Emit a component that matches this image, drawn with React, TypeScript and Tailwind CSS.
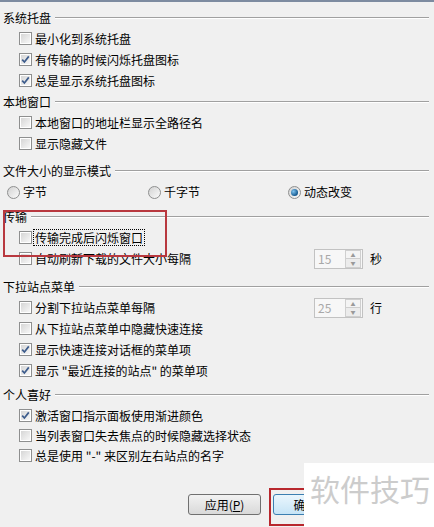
import React from 'react';

const font = { fontFamily: '"Noto Sans CJK SC", "Noto Sans", sans-serif' };

function Header({ title, className = '' }: { title: string; className?: string }) {
  return (
    <div className={'flex items-center h-5 pl-[3px] pr-[5px] ' + className}>
      <span className="leading-none">{title}</span>
      <div className="flex-1 ml-[4px] h-[2px] border-t border-[#a0a0a0] border-b border-b-white" />
    </div>
  );
}

function Box({ checked }: { checked?: boolean }) {
  return (
    <div className="relative w-[13px] h-[13px] border border-[#8e8f8f] bg-white shrink-0">
      <div className="absolute inset-[1px] bg-gradient-to-br from-[#d6d6d6] to-[#f7f7f7]" />
      {checked && (
        <svg className="absolute inset-0" width="11" height="11" viewBox="0 0 11 11">
          <path d="M2.2 5.6 L4.4 8 L8.8 2.4" fill="none" stroke="#3d5c8c" strokeWidth="1.7" />
        </svg>
      )}
    </div>
  );
}

function Check({ label, checked, focus, h = 'h-[21px]', children }: { label: string; checked?: boolean; focus?: boolean; h?: string; children?: React.ReactNode }) {
  return (
    <div className={'flex items-center pl-[19px] ' + h}>
      <div className="flex items-center w-[295px]">
        <Box checked={checked} />
        <span className={'ml-[1px] leading-[15px] whitespace-nowrap ' + (focus ? 'border border-dotted border-black px-[1px]' : 'px-[2px]')}>{label}</span>
      </div>
      {children}
    </div>
  );
}

function Spin({ value, unit }: { value: string; unit: string }) {
  return (
    <div className="flex items-center">
      <div className="flex items-center w-[49px] h-[20px] border border-[#c2c2c2] bg-[#f7f7f7]">
        <span className="flex-1 pl-[3px] text-[#a8a8a8] leading-none">{value}</span>
        <div className="flex flex-col w-[16px] h-[18px] mr-[1px]">
          <div className="flex-1 flex items-center justify-center border border-[#cfcfcf] bg-[#f4f4f4] text-[5px] text-[#9a9a9a] leading-none">▲</div>
          <div className="flex-1 flex items-center justify-center border border-t-0 border-[#cfcfcf] bg-[#ececec] text-[5px] text-[#9a9a9a] leading-none">▼</div>
        </div>
      </div>
      <span className="ml-[7px]">{unit}</span>
    </div>
  );
}

function Radio({ label, selected, w }: { label: string; selected?: boolean; w: string }) {
  return (
    <div className={'flex items-center ' + w}>
      <div className="relative w-[13px] h-[13px] rounded-full border border-[#8e8f8f] bg-gradient-to-br from-[#d2d2d2] to-[#fbfbfb] flex items-center justify-center">
        {selected && <div className="w-[7px] h-[7px] rounded-full bg-[radial-gradient(circle_at_35%_35%,#7fc3ef,#13588f_70%)]" />}
      </div>
      <span className="ml-[3px]">{label}</span>
    </div>
  );
}

function Button({ label, primary }: { label: React.ReactNode; primary?: boolean }) {
  return (
    <div
      className={
        'w-[73px] h-[21px] shrink-0 rounded-[3px] border flex items-center justify-center ' +
        (primary
          ? 'border-[#3c7fb1] bg-gradient-to-b from-[#eaf6fd] to-[#c6e4f6]'
          : 'border-[#707070] bg-gradient-to-b from-[#f2f2f2] to-[#d9d9d9]')
      }
    >
      {label}
    </div>
  );
}

export default function App() {
  return (
    <div className="relative w-[434px] h-[527px] bg-[#f0f0f0] text-[12px] text-black overflow-hidden" style={font}>
      <div className="h-[2px] bg-[#7d8ba0]" />
      <div className="pt-[6px]">
        <Header title="系统托盘" />
        <Check label="最小化到系统托盘" />
        <Check label="有传输的时候闪烁托盘图标" checked />
        <Check label="总是显示系统托盘图标" checked />

        <Header title="本地窗口" className="mt-[1px]" />
        <Check label="本地窗口的地址栏显示全路径名" />
        <Check label="显示隐藏文件" />

        <Header title="文件大小的显示模式" className="mt-[7px]" />
        <div className="flex items-center h-[22px] pl-[7px]">
          <Radio label="字节" w="w-[141px]" />
          <Radio label="千字节" w="w-[140px]" />
          <Radio label="动态改变" selected w="w-[100px]" />
        </div>

        <Header title="传输" className="mt-[4px]" />
        <Check label="传输完成后闪烁窗口" focus />
        <Check label="自动刷新下载的文件大小每隔">
          <Spin value="15" unit="秒" />
        </Check>

        <Header title="下拉站点菜单" className="mt-[8px]" />
        <Check label="分割下拉站点菜单每隔">
          <Spin value="25" unit="行" />
        </Check>
        <Check label="从下拉站点菜单中隐藏快速连接" />
        <Check label="显示快速连接对话框的菜单项" checked />
        <Check label={'显示 "最近连接的站点" 的菜单项'} checked />

        <Header title="个人喜好" className="mt-[4px]" />
        <Check label="激活窗口指示面板使用渐进颜色" checked h="h-[20px]" />
        <Check label="当列表窗口失去焦点的时候隐藏选择状态" h="h-[20px]" />
        <Check label={'总是使用 "-" 来区别左右站点的名字'} h="h-[20px]" />

        {/* button row is cut where the watermark sits */}
        <div className="flex mt-[29px] pl-[188px] gap-[12px] w-[304px] overflow-hidden">
          <Button label={<span>应用(<span className="underline">P</span>)</span>} />
          <Button label={<span className="pr-[8px]">确定</span>} primary />
        </div>
      </div>

      {/* annotation boxes */}
      <div className="absolute left-[3px] top-[210px] w-[164px] h-[47px] border-2 border-[#b8383f]" />
      <div className="absolute left-[269px] top-[488px] w-[80px] h-[38px] border-2 border-[#b8272d]" />

      {/* watermark */}
      <div className="absolute left-[304px] top-[463px] w-[130px] h-[64px] bg-white flex items-start pl-[6px] pt-[7px]">
        <span className="text-[30px] leading-[36px] text-[#cccccc]">软件技巧</span>
      </div>
    </div>
  );
}
